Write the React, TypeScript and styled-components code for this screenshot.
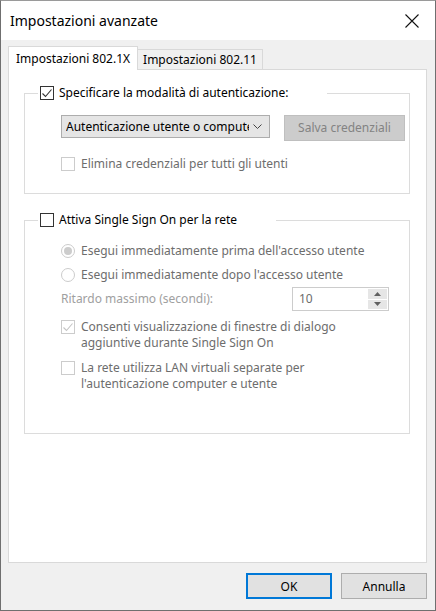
import React from 'react';
import styled, {createGlobalStyle} from 'styled-components';

const GlobalStyle = createGlobalStyle`
  html, body {
    margin: 0;
    padding: 0;
    background: #ffffff;
  }
  body {
    font-family: "Noto Sans", "Open Sans", "Liberation Sans", sans-serif;
    font-size: 12px;
    color: #000000;
  }
  * {
    box-sizing: border-box;
  }
`

const Window = styled.div`
  width: 436px;
  height: 611px;
  display: flex;
  flex-direction: column;
  background-color: #f0f0f0;
  border: 1px solid #6f6f6f;
  border-top-color: #9a9a9a;
`

const TitleBar = styled.div`
  height: 39px;
  flex-shrink: 0;
  display: flex;
  align-items: center;
  justify-content: space-between;
  padding: 0 16px 0 9px;
  background-color: #ffffff;
`

const Title = styled.div`
  font-size: 14px;
  line-height: 20px;
  color: #000000;
`

const Body = styled.div`
  flex: 1;
  display: flex;
  flex-direction: column;
  padding: 6px 8px 0 7px;
`

const TabRow = styled.div`
  height: 23px;
  display: flex;
  align-items: flex-end;
`

type TabProps = {
    active?: boolean
}

const Tab = styled.div<TabProps>`
  position: relative;
  z-index: 1;
  height: ${props => props.active ? '24px' : '20px'};
  margin-bottom: ${props => props.active ? '-1px' : '0'};
  display: flex;
  align-items: center;
  padding: 0 ${props => props.active ? '7px' : '5px'};
  background-color: ${props => props.active ? '#ffffff' : '#f0f0f0'};
  border: 1px solid #d9d9d9;
  border-bottom: none;
  border-left: ${props => props.active ? '1px solid #d9d9d9' : 'none'};
  white-space: nowrap;
`

const Panel = styled.div`
  height: 494px;
  padding: 16px 16px 0 15px;
  background-color: #ffffff;
  border: 1px solid #d9d9d9;
`

type GroupProps = {
    gap?: number
}

const Group = styled.fieldset<GroupProps>`
  margin: ${props => props.gap || 0}px 0 0 0;
  padding: 0 0 0 13px;
  border: 1px solid #dcdcdc;
  min-width: 0;
`

type LegendProps = {
    width: number
}

const Legend = styled.legend<LegendProps>`
  width: ${props => props.width}px;
  height: 14px;
  padding: 0 2px;
  display: flex;
  align-items: center;
  gap: 5px;
  line-height: 14px;
  white-space: nowrap;
`

type GroupBodyProps = {
    top: number
    bottom: number
}

const GroupBody = styled.div<GroupBodyProps>`
  padding: ${props => props.top}px 0 ${props => props.bottom}px 23px;
  display: flex;
  flex-direction: column;
`

type RowProps = {
    space?: number
}

const Row = styled.div<RowProps>`
  margin-top: ${props => props.space || 0}px;
  display: flex;
  align-items: flex-start;
  gap: 6px;
  line-height: 16px;
`

const Combo = styled.div`
  width: 209px;
  height: 23px;
  display: flex;
  align-items: center;
  justify-content: space-between;
  padding: 0 7px 0 4px;
  background-color: #e5e5e5;
  border: 1px solid #adadad;
  white-space: nowrap;
  overflow: hidden;
`

const ComboText = styled.span`
  overflow: hidden;
  width: 183px;
`

const Button = styled.div<{ variant?: 'default' | 'disabled' }>`
  width: ${props => props.variant === 'disabled' ? '121px' : '86px'};
  height: 26px;
  display: flex;
  align-items: center;
  justify-content: center;
  margin-left: ${props => props.variant === 'disabled' ? '8px' : '0'};
  color: ${props => props.variant === 'disabled' ? '#838383' : '#000000'};
  background-color: ${props => props.variant === 'disabled' ? '#cccccc' : '#e1e1e1'};
  border: ${props => props.variant === 'default' ? '2px solid #0078d7' : props.variant === 'disabled' ? '1px solid #bfbfbf' : '1px solid #adadad'};
  white-space: nowrap;
`

type TextProps = {
    dim?: 'soft' | 'light'
}

const Label = styled.span<TextProps>`
  color: ${props => props.dim === 'light' ? '#a0a0a0' : props.dim === 'soft' ? '#6d6d6d' : '#000000'};
  white-space: nowrap;
`

const Box = styled.span<{ disabled?: boolean }>`
  width: 14px;
  height: 14px;
  flex-shrink: 0;
  margin-top: 1px;
  display: flex;
  align-items: center;
  justify-content: center;
  background-color: #ffffff;
  border: 1px solid ${props => props.disabled ? '#cccccc' : '#333333'};
`

const LegendBox = styled(Box)`
  margin-top: 0;
`

const Radio = styled.span`
  width: 14px;
  height: 14px;
  flex-shrink: 0;
  margin-top: 1px;
  border-radius: 50%;
  display: flex;
  align-items: center;
  justify-content: center;
  border: 1px solid #cccccc;
  background-color: #ffffff;
`

const Dot = styled.span`
  width: 8px;
  height: 8px;
  border-radius: 50%;
  background-color: #cccccc;
`

const DelayRow = styled.div`
  margin-top: 4px;
  display: flex;
  align-items: center;
  line-height: 16px;
`

const DelayLabel = styled(Label)`
  width: 231px;
`

const Spin = styled.div`
  width: 97px;
  height: 24px;
  display: flex;
  align-items: center;
  justify-content: space-between;
  padding: 0 1px 0 6px;
  border: 1px solid #cccccc;
  background-color: #ffffff;
  color: #6d6d6d;
`

const SpinButtons = styled.div`
  width: 19px;
  height: 20px;
  display: flex;
  flex-direction: column;
  gap: 1px;
`

const SpinButton = styled.div`
  flex: 1;
  display: flex;
  align-items: center;
  justify-content: center;
  background-color: #e6e6e6;
`

const Footer = styled.div`
  flex: 1;
  display: flex;
  justify-content: flex-end;
  align-items: flex-start;
  gap: 9px;
  padding: 10px 0 0 0;
`

const Check = ({color}: { color: string }) => (
    <svg width="12" height="12" viewBox="0 0 12 12">
        <polyline points="1.5,6.5 4.5,9.5 10.5,2.5" fill="none" stroke={color} strokeWidth="1.1"/>
    </svg>
)

const App = () => {
    return (
        <>
            <GlobalStyle/>
            <Window>
                <TitleBar>
                    <Title>Impostazioni avanzate</Title>
                    <svg width="14" height="14" viewBox="0 0 14 14">
                        <path d="M0.5 0.5 L13.5 13.5 M13.5 0.5 L0.5 13.5" stroke="#111111" strokeWidth="1.1"/>
                    </svg>
                </TitleBar>
                <Body>
                    <TabRow>
                        <Tab active>Impostazioni 802.1X</Tab>
                        <Tab>Impostazioni 802.11</Tab>
                    </TabRow>
                    <Panel>
                        <Group>
                            <Legend width={289}>
                                <LegendBox><Check color="#333333"/></LegendBox>
                                <Label>Specificare la modalità di autenticazione:</Label>
                            </Legend>
                            <GroupBody top={15} bottom={21}>
                                <Row>
                                    <Combo>
                                        <ComboText>Autenticazione utente o computer</ComboText>
                                        <svg width="9" height="6" viewBox="0 0 9 6">
                                            <polyline points="0.5,0.5 4.5,4.5 8.5,0.5" fill="none" stroke="#444444"/>
                                        </svg>
                                    </Combo>
                                    <Button variant="disabled">Salva credenziali</Button>
                                </Row>
                                <Row space={15}>
                                    <Box disabled/>
                                    <Label dim="soft">Elimina credenziali per tutti gli utenti</Label>
                                </Row>
                            </GroupBody>
                        </Group>
                        <Group gap={19}>
                            <Legend width={238}>
                                <LegendBox/>
                                <Label>Attiva Single Sign On per la rete</Label>
                            </Legend>
                            <GroupBody top={16} bottom={41}>
                                <Row>
                                    <Radio><Dot/></Radio>
                                    <Label dim="soft">Esegui immediatamente prima dell'accesso utente</Label>
                                </Row>
                                <Row space={8}>
                                    <Radio/>
                                    <Label dim="soft">Esegui immediatamente dopo l'accesso utente</Label>
                                </Row>
                                <DelayRow>
                                    <DelayLabel dim="light">Ritardo massimo (secondi):</DelayLabel>
                                    <Spin>
                                        <span>10</span>
                                        <SpinButtons>
                                            <SpinButton>
                                                <svg width="7" height="4" viewBox="0 0 7 4"><polygon points="0,4 3.5,0 7,4" fill="#606060"/></svg>
                                            </SpinButton>
                                            <SpinButton>
                                                <svg width="7" height="4" viewBox="0 0 7 4"><polygon points="0,0 3.5,4 7,0" fill="#606060"/></svg>
                                            </SpinButton>
                                        </SpinButtons>
                                    </Spin>
                                </DelayRow>
                                <Row space={8}>
                                    <Box disabled><Check color="#c4c4c4"/></Box>
                                    <Label dim="soft">Consenti visualizzazione di finestre di dialogo<br/>aggiuntive durante Single Sign On</Label>
                                </Row>
                                <Row space={9}>
                                    <Box disabled/>
                                    <Label dim="soft">La rete utilizza LAN virtuali separate per<br/>l'autenticazione computer e utente</Label>
                                </Row>
                            </GroupBody>
                        </Group>
                    </Panel>
                    <Footer>
                        <Button variant="default">OK</Button>
                        <Button>Annulla</Button>
                    </Footer>
                </Body>
            </Window>
        </>
    );
};

export default App;
